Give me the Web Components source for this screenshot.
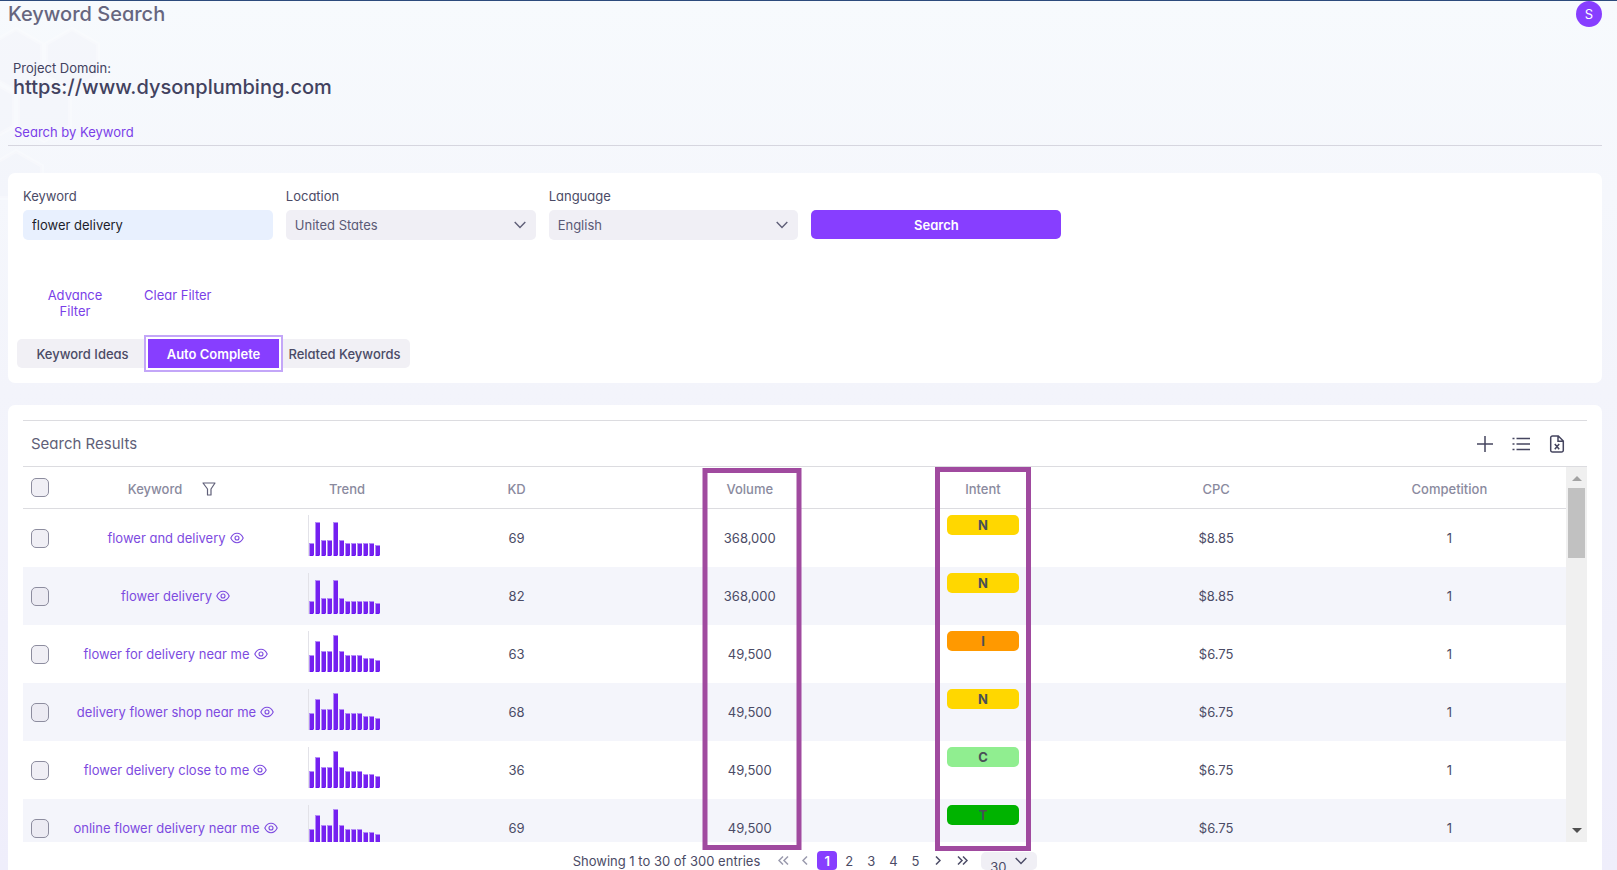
<!DOCTYPE html>
<html lang="en">
<head>
<meta charset="UTF-8">
<meta name="viewport" content="width=device-width, initial-scale=1">
<title>Keyword Search</title>
<style>
  html, body {
    margin: 0;
    height: 100%;
  }

  body {
    font-family: Inter, "Liberation Sans", sans-serif;
    font-feature-settings: "cv11";
    font-size: 13px;
    line-height: 16px;
    color: #4b4b66;
    overflow: hidden;
  }
</style>
</head>
<body>
<keyword-app></keyword-app>

<script>
class BaseElement extends HTMLElement {
  constructor() {
    super();
    this.attachShadow({ mode: "open" });
    const template = document.createElement("template");
    template.innerHTML = this.markup;
    this.shadowRoot.appendChild(template.content.cloneNode(true));
  }
}

class AppHeader extends BaseElement {
  get markup() {
    return `
      <style>
        :host {
          display: block;
          border-top: 1px solid #2c4a7c;
        }

        header {
          display: flex;
          justify-content: space-between;
          align-items: center;
          height: 26px;
        }

        h1 {
          margin: 0;
          font-size: 20px;
          line-height: 26px;
          font-weight: 500;
          color: #66667f;
        }

        button {
          width: 26px;
          height: 26px;
          padding: 0;
          border: none;
          border-radius: 50%;
          background: #873eff;
          color: #fff;
          font: inherit;
        }
      </style>
      <header>
        <h1><slot></slot></h1>
        <button aria-label="Account">S</button>
      </header>
    `;
  }
}

class ProjectDomain extends BaseElement {
  get markup() {
    return `
      <style>
        :host {
          display: block;
          padding: 33px 5px 0;
          color: #42425f;
        }

        p, h2 {
          margin: 0;
        }

        h2 {
          font-size: 20px;
          line-height: 22px;
          font-weight: 500;
        }

        nav {
          padding: 26px 1px 5px;
        }

        a {
          color: #7a3fe8;
          text-decoration: none;
        }

        hr {
          margin: 0 -5px;
          border: none;
          border-top: 1px solid #d6d6df;
        }
      </style>
      <p>Project Domain:</p>
      <h2><slot></slot></h2>
      <nav><a href="#keyword">Search by Keyword</a></nav>
      <hr>
    `;
  }
}

class FieldSelect extends BaseElement {
  get markup() {
    return `
      <style>
        :host {
          display: block;
        }

        label {
          display: block;
          line-height: 16px;
          margin-bottom: 6px;
        }

        .box {
          display: grid;
          align-items: center;
          border-radius: 5px;
          background: #f0eff5;
        }

        select, svg {
          grid-area: 1 / 1;
        }

        select {
          appearance: none;
          width: 100%;
          height: 30px;
          padding: 0 9px;
          border: none;
          background: none;
          color: #5a5a75;
          font: inherit;
          font-feature-settings: inherit;
        }

        svg {
          justify-self: end;
          margin-right: 10px;
          pointer-events: none;
        }
      </style>
      <label for="field"></label>
      <div class="box">
        <select id="field"><option></option></select>
        <svg width="12" height="8" fill="none" stroke="#5f5f78" stroke-width="1.4"><path d="M.7 1 6 6.6 11.3 1"/></svg>
      </div>
    `;
  }

  connectedCallback() {
    this.shadowRoot.querySelector("label").textContent = this.getAttribute("label");
    this.shadowRoot.querySelector("option").textContent = this.getAttribute("value");
  }
}

class SearchPanel extends BaseElement {
  get markup() {
    return `
      <style>
        :host {
          display: block;
          margin-top: 27px;
          padding: 15px;
          border-radius: 7px;
          background: #fff;
        }

        form {
          display: grid;
          grid-template-columns: repeat(6, 1fr);
          gap: 13px;
          align-items: end;
        }

        label {
          display: block;
          margin-bottom: 6px;
        }

        input {
          display: block;
          box-sizing: border-box;
          width: 100%;
          height: 30px;
          padding: 0 9px;
          border: none;
          border-radius: 5px;
          background: #e8f0fe;
          color: #1d1d2b;
          font: inherit;
          font-feature-settings: inherit;
        }

        button {
          padding: 0;
          border: none;
          font: inherit;
          font-feature-settings: inherit;
        }

        .search {
          height: 29px;
          margin-bottom: 1px;
          border-radius: 5px;
          background: #873eff;
          color: #fff;
          font-weight: 600;
        }

        .filters {
          display: flex;
          align-items: flex-start;
          gap: 32px;
          padding: 47px 0 0 15px;
        }

        .filters button {
          background: none;
          color: #7a3fe8;
        }

        .filters button:first-child {
          width: 74px;
        }

        .tabs {
          display: flex;
          margin: 20px 0 0 -6px;
        }

        .tabs button {
          width: 131px;
          height: 29px;
          background: #f1f0f5;
          color: #4b4b66;
          font-weight: 500;
        }

        .tabs button:first-child {
          border-radius: 5px 0 0 5px;
        }

        .tabs button:last-child {
          border-radius: 0 5px 5px 0;
        }

        .tabs .active {
          z-index: 1;
          background: #873eff;
          color: #fff;
          font-weight: 600;
          box-shadow: 0 0 0 2px #fff, 0 0 0 4px #c3a6f8;
        }
      </style>
      <form onsubmit="return false">
        <div>
          <label for="keyword">Keyword</label>
          <input id="keyword" type="text" value="flower delivery">
        </div>
        <field-select label="Location" value="United States"></field-select>
        <field-select label="Language" value="English"></field-select>
        <button class="search">Search</button>
      </form>
      <div class="filters">
        <button>Advance Filter</button>
        <button>Clear Filter</button>
      </div>
      <div class="tabs">
        <button>Keyword Ideas</button>
        <button class="active">Auto Complete</button>
        <button>Related Keywords</button>
      </div>
    `;
  }
}

class TrendChart extends BaseElement {
  get markup() {
    return `
      <style>
        :host {
          display: block;
        }

        svg {
          display: block;
          margin: 0 auto;
        }
      </style>
      <svg width="78" height="46" role="img" aria-label="Trend"></svg>
    `;
  }

  connectedCallback() {
    const values = this.getAttribute("values").split(",").map(Number);
    const bars = values.map((v, i) =>
      `<rect x="${1 + i * 6}" y="${41 - v}" width="5" height="${v}" fill="#b48cf8"/>
       <rect x="${2 + i * 6}" y="${42 - v}" width="3" height="${v - 1}" fill="#6a12f2"/>
       <rect x="${2 + i * 6}" y="${42 - v}" width="4" height="${v - 2}" fill="#7420f0"/>`
    );
    this.shadowRoot.querySelector("svg").innerHTML =
      `<path d="M.5 0v41" stroke="#e2e2e8"/>` + bars.join("");
  }
}

class IntentBadge extends BaseElement {
  get markup() {
    return `
      <style>
        :host {
          display: block;
          width: 72px;
          height: 46px;
          margin: 0 auto;
        }

        span {
          display: block;
          border-radius: 5px;
          line-height: 20px;
          font-weight: 700;
          color: #495057;
        }
      </style>
      <span><slot></slot></span>
    `;
  }

  connectedCallback() {
    const colors = { N: "#ffd700", I: "#ff9900", C: "#90ee90", T: "#00b300" };
    this.shadowRoot.querySelector("span").style.background = colors[this.textContent];
  }
}

class ScrollTrack extends BaseElement {
  get markup() {
    return `
      <style>
        :host {
          display: flex;
          flex-direction: column;
          justify-content: space-between;
          align-items: center;
          width: 21px;
          background: #f0f0f0;
        }

        .thumb {
          width: 17px;
          height: 70px;
          margin-bottom: auto;
          background: #c1c1c1;
        }

        svg {
          display: block;
        }
      </style>
      <svg width="10" height="21"><path d="M0 14 5 9l5 5z" fill="#a3a3a3"/></svg>
      <div class="thumb"></div>
      <svg width="10" height="21"><path d="M0 7h10l-5 5z" fill="#505050"/></svg>
    `;
  }
}

const HIGH = "13,34,16,16,34,16,13,13,13,13,13,11";
const LOW = "17,31,21,21,37,21,17,17,17,14,14,12";

const ROWS = [
  ["flower and delivery", HIGH, 69, "368,000", "N", "$8.85", 1],
  ["flower delivery", HIGH, 82, "368,000", "N", "$8.85", 1],
  ["flower for delivery near me", LOW, 63, "49,500", "I", "$6.75", 1],
  ["delivery flower shop near me", LOW, 68, "49,500", "N", "$6.75", 1],
  ["flower delivery close to me", LOW, 36, "49,500", "C", "$6.75", 1],
  ["online flower delivery near me", LOW, 69, "49,500", "T", "$6.75", 1]
];

class ResultsTable extends BaseElement {
  get markup() {
    return `
      <style>
        :host {
          display: flex;
          flex: 1;
          min-height: 0;
        }

        .view {
          flex: 1;
          min-width: 0;
          overflow: hidden;
        }

        table {
          width: 100%;
          table-layout: fixed;
          border-collapse: separate;
          border-spacing: 0;
          text-align: center;
        }

        th, td {
          padding: 0;
        }

        th {
          box-sizing: border-box;
          height: 42px;
          padding-top: 2px;
          border-bottom: 1px solid #dcdce0;
          font-weight: 500;
          color: #8a8a9e;
        }

        th.check {
          padding-top: 0;
        }

        td {
          height: 58px;
        }

        tbody tr:nth-child(even) {
          background: #f4f5fb;
        }

        .check { width: 34px; }
        .keyword { width: 237px; }
        .trend { width: 106px; }

        .name {
          display: flex;
          justify-content: center;
          align-items: center;
          gap: 20px;
          padding-right: 7px;
        }

        input {
          appearance: none;
          display: block;
          box-sizing: border-box;
          width: 18px;
          height: 19px;
          margin: 0 8px;
          border: 1px solid #8d8d9f;
          border-radius: 5px;
          background: rgba(230, 229, 238, 0.6);
        }

        a {
          display: inline-flex;
          align-items: center;
          gap: 4px;
          color: #7d4be0;
          text-decoration: none;
        }

        button {
          display: block;
          padding: 0;
          border: none;
          background: none;
        }

        svg {
          display: block;
        }
      </style>
      <div class="view">
        <table>
          <thead>
            <tr>
              <th class="check"><input type="checkbox" aria-label="Select all"></th>
              <th class="keyword">
                <div class="name">
                  Keyword
                  <button aria-label="Filter">
                    <svg width="14" height="14" fill="none" stroke="#5f5f78" stroke-width="1.2" stroke-linejoin="round"><path d="M1 1h12L9 7v6H5.500V7z"/></svg>
                  </button>
                </div>
              </th>
              <th class="trend">Trend</th>
              <th>KD</th>
              <th>Volume</th>
              <th>Intent</th>
              <th>CPC</th>
              <th>Competition</th>
            </tr>
          </thead>
          <tbody></tbody>
        </table>
      </div>
      <scroll-track></scroll-track>
    `;
  }

  connectedCallback() {
    this.shadowRoot.querySelector("tbody").innerHTML = ROWS.map(
      ([keyword, trend, kd, volume, intent, cpc, competition]) => `
      <tr>
        <td><input type="checkbox" aria-label="Select ${keyword}"></td>
        <td>
          <a href="#keyword">${keyword}
            <svg width="14" height="12" fill="none" stroke="currentColor" stroke-width="1.1"><path d="M.8 6C2 3.400 4.200 1.300 7 1.300S12 3.400 13.200 6C12 8.600 9.800 10.700 7 10.700S2 8.600.8 6z"/><circle cx="7" cy="6" r="2"/></svg>
          </a>
        </td>
        <td><trend-chart values="${trend}"></trend-chart></td>
        <td>${kd}</td>
        <td>${volume}</td>
        <td><intent-badge>${intent}</intent-badge></td>
        <td>${cpc}</td>
        <td>${competition}</td>
      </tr>`
    ).join("");
  }
}

class TablePaginator extends BaseElement {
  get markup() {
    return `
      <style>
        :host {
          display: flex;
          justify-content: center;
          align-items: center;
          gap: 2px;
          padding-top: 9px;
          height: 19px;
        }

        span {
          margin-right: 11px;
        }

        button {
          display: grid;
          place-items: center;
          width: 20px;
          height: 19px;
          padding: 0;
          border: none;
          border-radius: 4px;
          background: none;
          color: inherit;
          font: inherit;
          font-feature-settings: inherit;
        }

        .forward {
          width: 22px;
        }

        .current {
          background: #873eff;
          color: #fff;
          font-weight: 600;
        }

        button:disabled {
          color: #9a9aad;
        }

        svg {
          fill: none;
          stroke: currentColor;
          stroke-width: 1.5;
        }

        .size {
          display: grid;
          width: 56px;
          height: 18px;
          margin-left: 6px;
          overflow: hidden;
          border-radius: 5px;
          background: #f0eff5;
        }

        select, .size svg {
          grid-area: 1 / 1;
        }

        select {
          appearance: none;
          height: 30px;
          padding: 0 9px;
          border: none;
          background: none;
          color: inherit;
          font: inherit;
          font-feature-settings: inherit;
        }

        .size svg {
          justify-self: end;
          margin: 5px 10px 0 0;
          stroke-width: 1.4;
          pointer-events: none;
        }
      </style>
      <span>Showing 1 to 30 of 300 entries</span>
      <button disabled aria-label="First page"><svg width="11" height="9"><path d="M5 .5 1 4.500l4 4M10 .5 6 4.500l4 4"/></svg></button>
      <button disabled aria-label="Previous page"><svg width="6" height="9"><path d="M5 .5 1 4.500l4 4"/></svg></button>
      <button class="current">1</button>
      <button>2</button>
      <button>3</button>
      <button>4</button>
      <button>5</button>
      <button class="forward" aria-label="Next page"><svg width="6" height="9"><path d="m1 .5 4 4-4 4"/></svg></button>
      <button class="forward" aria-label="Last page"><svg width="11" height="9"><path d="m1 .5 4 4-4 4M6 .5l4 4-4 4"/></svg></button>
      <div class="size">
        <select aria-label="Rows per page"><option>30</option></select>
        <svg width="12" height="8"><path d="M.7 1 6 6.600 11.300 1"/></svg>
      </div>
    `;
  }
}

class ResultsPanel extends BaseElement {
  get markup() {
    return `
      <style>
        :host {
          display: flex;
          flex-direction: column;
          flex: 1;
          min-height: 0;
          margin-top: 22px;
          padding: 15px 15px 0;
          border-radius: 7px 7px 0 0;
          background: #fff;
        }

        header {
          display: flex;
          justify-content: space-between;
          align-items: center;
          height: 45px;
          padding: 0 21px 0 8px;
          border: 1px solid #dcdce0;
          border-width: 1px 0;
        }

        h3 {
          margin: 0;
          font-size: 15px;
          font-weight: 400;
          color: #5f5f78;
        }

        .tools {
          display: flex;
          gap: 18px;
        }

        button {
          padding: 0;
          border: none;
          background: none;
          color: #45455f;
        }

        svg {
          display: block;
          fill: none;
          stroke: currentColor;
          stroke-width: 1.5;
        }

        .body {
          position: relative;
          display: flex;
          flex-direction: column;
          flex: 1;
          min-height: 0;
        }

        /* frames around the Volume and Intent columns */
        .frame {
          position: absolute;
          box-sizing: border-box;
          border: 5px solid #a04a9f;
          transform: translateX(-50%);
          pointer-events: none;
        }

        .volume {
          top: 1px;
          bottom: 20px;
          left: calc(379px + (100% - 398px) * 0.3);
          width: 99px;
        }

        .intent {
          top: 0;
          bottom: 19px;
          left: calc(377px + (100% - 398px) * 0.5);
          width: 96px;
        }
      </style>
      <header>
        <h3>Search Results</h3>
        <div class="tools">
          <button aria-label="Add"><svg width="18" height="18"><path d="M9 1v16M1 9h16"/></svg></button>
          <button aria-label="List"><svg width="18" height="18"><path d="M4.500 3.500H18M4.500 9H18M4.500 14.500H18M.5 3.500h2M.5 9h2M.5 14.500h2"/></svg></button>
          <button aria-label="Export to Excel"><svg width="18" height="18"><path d="M4.500 1h5.800L15.300 6v9.200a1.800 1.800 0 0 1-1.800 1.800h-9a1.800 1.800 0 0 1-1.800-1.800V2.800A1.800 1.800 0 0 1 4.500 1zM10 1v5.200h5.300M6.800 9l4.400 5.200M11.200 9l-4.400 5.200"/></svg></button>
        </div>
      </header>
      <div class="body">
        <results-table></results-table>
        <table-paginator></table-paginator>
        <div class="frame volume"></div>
        <div class="frame intent"></div>
      </div>
    `;
  }
}

class KeywordApp extends BaseElement {
  get markup() {
    return `
      <style>
        :host {
          display: block;
          height: 100vh;
          background: linear-gradient(#f7fafd, #f3f4fb 45%, #efeefb);
        }

        .page {
          position: relative;
          display: flex;
          flex-direction: column;
          height: 100%;
        }

        .pattern {
          position: absolute;
          top: 1px;
          left: 0;
        }

        main {
          position: relative;
          display: flex;
          flex-direction: column;
          flex: 1;
          min-height: 0;
          padding: 0 15px 0 8px;
        }

        app-header {
          margin: 0 -15px 0 -8px;
          padding: 0 15px 0 8px;
        }
      </style>
      <div class="page">
        <svg class="pattern" width="130" height="200" fill="#eef1f8" fill-opacity=".25" stroke="#fff" stroke-opacity=".25" stroke-width="4">
          <path d="m16 28 26 15v32L16 90-10 75V43zM72 28l26 15v32L72 90 46 75V43zM44 78l26 15v32l-26 15-26-15V93zM16 150l26 15v32H-10v-32zM-12 78l26 15v32l-26 15z"/>
        </svg>
        <main>
          <app-header>Keyword Search</app-header>
          <project-domain>https://www.dysonplumbing.com</project-domain>
          <search-panel></search-panel>
          <results-panel></results-panel>
        </main>
      </div>
    `;
  }
}

customElements.define("app-header", AppHeader);
customElements.define("project-domain", ProjectDomain);
customElements.define("field-select", FieldSelect);
customElements.define("search-panel", SearchPanel);
customElements.define("trend-chart", TrendChart);
customElements.define("intent-badge", IntentBadge);
customElements.define("scroll-track", ScrollTrack);
customElements.define("results-table", ResultsTable);
customElements.define("table-paginator", TablePaginator);
customElements.define("results-panel", ResultsPanel);
customElements.define("keyword-app", KeywordApp);
</script>
</body>
</html>
